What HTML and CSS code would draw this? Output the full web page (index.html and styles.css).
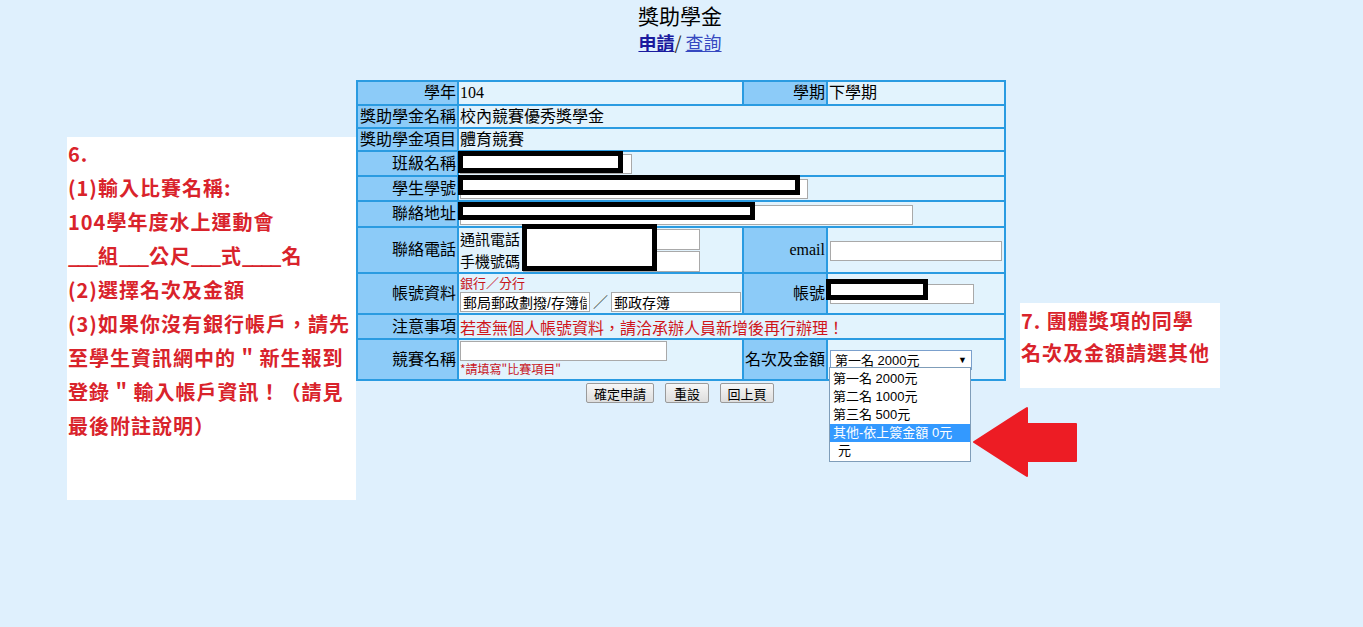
FILE: index.html
```html
<!DOCTYPE html>
<html lang="zh-Hant">
<head>
    <meta charset="UTF-8">
    <title>獎助學金</title>
    <link rel="stylesheet" href="styles.css">
</head>
<body>
<div class="page">
    <div class="title">獎助學金</div>
    <div class="tabs"><a href="#" class="current">申請</a>/ <a href="#">查詢</a></div>

    <div class="sheet">
        <table class="form">
            <colgroup>
                <col class="c1"><col class="c2"><col class="c3"><col class="c4">
            </colgroup>
            <tr class="h24"><th>學年</th><td>104</td><th>學期</th><td>下學期</td></tr>
            <tr class="h23"><th>獎助學金名稱</th><td colspan="3">校內競賽優秀獎學金</td></tr>
            <tr class="h23"><th>獎助學金項目</th><td colspan="3">體育競賽</td></tr>
            <tr class="h25"><th>班級名稱</th><td colspan="3"><input class="field w-class"></td></tr>
            <tr class="h25"><th>學生學號</th><td colspan="3"><input class="field w-id"></td></tr>
            <tr class="h26"><th>聯絡地址</th><td colspan="3"><input class="field w-addr"></td></tr>
            <tr class="h46">
                <th>聯絡電話</th>
                <td>
                    <div class="phone">
                        <span>通訊電話</span><input class="field w-tel">
                        <span>手機號碼</span><input class="field w-tel">
                    </div>
                </td>
                <th>email</th>
                <td><input class="field w-mail"></td>
            </tr>
            <tr class="h41">
                <th>帳號資料</th>
                <td>
                    <div class="hint">銀行／分行</div>
                    <div class="bank">
                        <input class="field w-bank" value="郵局郵政劃撥/存簿儲金"><span class="sep">／</span><input class="field w-bank" value="郵政存簿">
                    </div>
                </td>
                <th>帳號</th>
                <td><input class="field w-acct"></td>
            </tr>
            <tr class="h25"><th>注意事項</th><td colspan="3" class="warn">若查無個人帳號資料，請洽承辦人員新增後再行辦理！</td></tr>
            <tr class="h41">
                <th>競賽名稱</th>
                <td class="top">
                    <input class="field w-name">
                    <div class="req">*請填寫"比賽項目"</div>
                </td>
                <th>名次及金額</th>
                <td>
                    <div class="picker"><span>第一名 2000元</span><span class="caret">▼</span></div>
                </td>
            </tr>
        </table>

        <div class="actions">
            <button class="btn b-send">確定申請</button>
            <button class="btn b-reset">重設</button>
            <button class="btn b-back">回上頁</button>
        </div>

        <!-- 個資遮蔽 -->
        <span class="mask m-class"></span>
        <span class="mask m-id"></span>
        <span class="mask m-addr"></span>
        <span class="mask m-tel"></span>
        <span class="mask m-acct"></span>

        <!-- 名次下拉選單（展開） -->
        <ul class="options">
            <li>第一名 2000元</li>
            <li>第二名 1000元</li>
            <li>第三名 500元</li>
            <li class="on">其他-依上簽金額 0元</li>
            <li class="indent">元</li>
        </ul>
    </div>

    <div class="note note-left">
        6.<br>
        (1)輸入比賽名稱:<br>
        104學年度水上運動會<br>
        <span class="blank">___</span>組<span class="blank">___</span>公尺<span class="blank">___</span>式<span class="blank">____</span>名<br>
        (2)選擇名次及金額<br>
        (3)如果你沒有銀行帳戶，請先<br>
        至學生資訊網中的 " 新生報到<br>
        登錄 " 輸入帳戶資訊！（請見<br>
        最後附註說明）
    </div>

    <div class="note note-right">
        7. 團體獎項的同學<br>
        名次及金額請選其他
    </div>

    <svg class="arrow" width="106" height="72" viewBox="0 0 106 72">
        <path d="M2 36 L55 2 L55 18 L104 18 L104 55 L55 55 L55 70 Z" fill="#ed1c24" stroke="#ed1c24" stroke-width="2" stroke-linejoin="round"/>
    </svg>
</div>
</body>
</html>
```

FILE: styles.css
```css
body {
    margin: 0;
    background: #dff0fd;
    font-family: "Liberation Serif", "Noto Sans CJK TC", serif;
    color: #000;
}
.page {
    position: relative;
    width: 1360px;
    height: 627px;
}
.title {
    text-align: center;
    font-family: "Noto Sans CJK TC", sans-serif;
    font-size: 21px;
    line-height: 26px;
    padding-top: 2px;
}
.tabs {
    text-align: center;
    font-family: "Noto Sans CJK TC", sans-serif;
    font-size: 18px;
    line-height: 22px;
    margin-top: 3px;
    color: #333;
}
.tabs a {
    color: #3548c0;
}
.tabs a.current {
    color: #1a1a9e;
    font-weight: bold;
}

/* 申請表 */
.sheet {
    position: relative;
    width: 648px;
    margin: 27px auto 0;
}
.form {
    width: 648px;
    border-collapse: collapse;
    table-layout: fixed;
    font-size: 16px;
    line-height: 20px;
}
.c1 { width: 101px; }
.c2 { width: 285px; }
.c3 { width: 84px; }
.c4 { width: 178px; }
.form th,
.form td {
    border: 2px solid #2a9be1;
    padding: 0 1px;
}
.form th {
    background: #8ccbf8;
    text-align: right;
    font-weight: normal;
    white-space: nowrap;
}
.form td {
    background: #e2f3fd;
    text-align: left;
}
.form td.top {
    vertical-align: top;
    padding-top: 1px;
}
.h23 { height: 23px; }
.h24 { height: 24px; }
.h25 { height: 25px; }
.h26 { height: 26px; }
.h41 { height: 41px; }
.h46 { height: 46px; }

.field {
    box-sizing: border-box;
    height: 20px;
    margin: 0;
    padding: 0 2px;
    border: 1px solid #a9a9a9;
    background: #fff;
    font: 13px "Liberation Sans", "Noto Sans CJK TC", sans-serif;
    vertical-align: middle;
}
.w-class { width: 172px; }
.w-id { width: 348px; }
.w-addr { width: 453px; }
.w-tel { width: 177px; height: 21px; }
.w-mail { width: 172px; margin-left: 1px; }
.w-bank { width: 130px; font-size: 14px; }
.w-acct { width: 144px; margin-left: 1px; }
.w-name { display: block; width: 207px; }

.phone {
    display: grid;
    grid-template-columns: 60px 177px;
    column-gap: 3px;
    row-gap: 1px;
    align-items: center;
    font-family: "Noto Sans CJK TC", sans-serif;
    font-size: 15px;
    line-height: 20px;
}
.hint {
    color: #c8141c;
    font-family: "Noto Sans CJK TC", sans-serif;
    font-size: 13px;
    line-height: 15px;
}
.bank {
    display: flex;
    align-items: center;
    margin-top: 2px;
}
.sep {
    width: 21px;
    text-align: center;
    font-family: "Noto Sans CJK TC", sans-serif;
    font-size: 15px;
    color: #444;
}
.warn {
    color: #d0161b;
    font-family: "Noto Sans CJK TC", sans-serif;
}
.req {
    color: #c8141c;
    font-family: "Noto Sans CJK TC", sans-serif;
    font-size: 12px;
    line-height: 16px;
}
.picker {
    box-sizing: border-box;
    width: 142px;
    height: 20px;
    margin-left: 1px;
    padding: 0 4px;
    display: flex;
    justify-content: space-between;
    align-items: center;
    border: 1px solid #7ba0cd;
    background: #fff;
    font: 13px "Liberation Sans", "Noto Sans CJK TC", sans-serif;
}
.caret {
    font-size: 9px;
}

.actions {
    display: flex;
    justify-content: center;
    gap: 11px;
    margin-top: 2px;
}
.btn {
    box-sizing: border-box;
    height: 20px;
    padding: 0;
    border: 1px solid #9a9a9a;
    border-radius: 2px;
    background: linear-gradient(#f7f7f7, #dddddd);
    font: 13px "Noto Sans CJK TC", sans-serif;
    line-height: 17px;
    color: #000;
}
.b-send { width: 68px; }
.b-reset { width: 44px; }
.b-back { width: 54px; }

/* 遮蔽框 */
.mask {
    position: absolute;
    box-sizing: border-box;
    border: 5px solid #000;
    background: #fff;
}
.m-class { left: 102px; top: 71px; width: 165px; height: 22px; }
.m-id { left: 102px; top: 95px; width: 342px; height: 20px; }
.m-addr { left: 102px; top: 122px; width: 297px; height: 18px; }
.m-tel { left: 166px; top: 144px; width: 135px; height: 47px; }
.m-acct { left: 470px; top: 199px; width: 102px; height: 21px; }

.options {
    position: absolute;
    left: 473px;
    top: 287px;
    box-sizing: border-box;
    width: 142px;
    margin: 0;
    padding: 2px 0 1px;
    list-style: none;
    border: 1px solid #7f9db9;
    background: #fff;
    font: 13px "Liberation Sans", "Noto Sans CJK TC", sans-serif;
    line-height: 18px;
}
.options li {
    padding-left: 3px;
}
.options li.on {
    background: #3399ff;
    color: #fff;
}
.options li.indent {
    padding-left: 8px;
}

/* 說明標註 */
.note {
    position: absolute;
    box-sizing: border-box;
    background: #fff;
    color: #d9232b;
    font: bold 20px/34px "Noto Sans CJK TC", sans-serif;
    letter-spacing: 1px;
    white-space: nowrap;
}
.note .blank {
    letter-spacing: -2px;
    margin-right: 2px;
}
.note-left {
    left: 67px;
    top: 137px;
    width: 289px;
    height: 363px;
    padding: 0 0 0 1px;
}
.note-right {
    left: 1020px;
    top: 303px;
    width: 200px;
    height: 85px;
    padding: 2px 0 0 1px;
    line-height: 32px;
}
.arrow {
    position: absolute;
    left: 972px;
    top: 406px;
}
```
